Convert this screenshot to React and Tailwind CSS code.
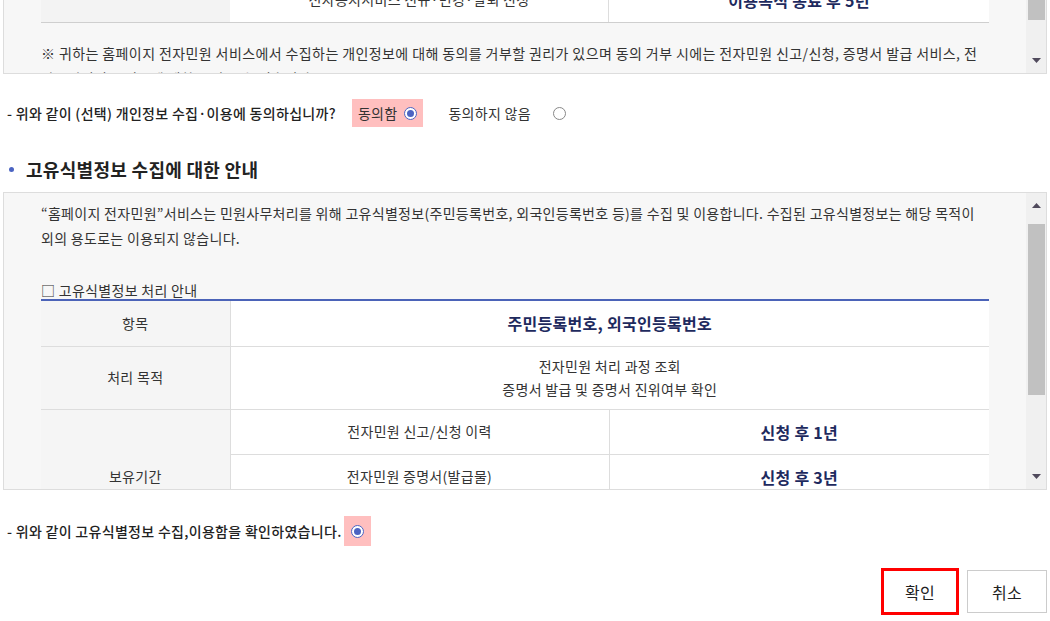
// App.jsx
import React from "react";

const font = { fontFamily: '"Noto Sans CJK KR", "Noto Sans", sans-serif' };

function Radio({ checked }) {
  if (checked) {
    return (
      <span className="inline-flex w-[13px] h-[13px] rounded-full border border-[#4b64c2] items-center justify-center bg-white">
        <span className="w-[7px] h-[7px] rounded-full bg-[#4b64c2]" />
      </span>
    );
  }
  return <span className="inline-block w-[13px] h-[13px] rounded-full border border-[#888] bg-white" />;
}

function Scrollbar({ thumbTop, thumbHeight, showUp }) {
  return (
    <div className="w-[20px] shrink-0 bg-[#f0f0f0] flex flex-col items-center relative">
      {showUp && (
        <svg width="9" height="5" viewBox="0 0 9 5" className="absolute top-[10px] left-[6px]">
          <path d="M4.5 0 L9 5 L0 5 Z" fill="#504a5c" />
        </svg>
      )}
      <div
        className="absolute left-[2px] right-[1px] bg-[#c1c1c1]"
        style={{ top: thumbTop, height: thumbHeight }}
      />
      <svg width="9" height="5" viewBox="0 0 9 5" className="absolute bottom-[10px] left-[6px]">
        <path d="M0 0 L9 0 L4.5 5 Z" fill="#504a5c" />
      </svg>
    </div>
  );
}

export default function App() {
  return (
    <div className="w-[1050px] h-[621px] overflow-hidden bg-white text-[#333] px-[3px] tracking-[0.3px]" style={font}>
      {/* 위쪽 개인정보 박스 (스크롤된 상태) */}
      <div className="h-[74px] border-x border-b border-[#dddddd] bg-[#f7f7f7] flex overflow-hidden">
        <div className="flex-1 px-[37px] overflow-hidden">
          <div className="mt-[-23px] flex h-[46px] border-b border-[#cfcfcf] text-[14px]">
            <div className="w-[189px] bg-[#f3f3f3]" />
            <div className="w-[379px] bg-white border-r border-[#dddddd] flex items-center justify-center">
              전자통지서비스 신규·변경·탈퇴 신청
            </div>
            <div className="flex-1 bg-white flex items-center justify-center text-[16px] font-bold text-[#1e2a5e]">
              이용목적 종료 후 5년
            </div>
          </div>
          <p className="mt-[18px] text-[14px] leading-[25px] tracking-[0.4px]">
            ※ 귀하는 홈페이지 전자민원 서비스에서 수집하는 개인정보에 대해 동의를 거부할 권리가 있으며 동의 거부 시에는 전자민원 신고/신청, 증명서 발급 서비스, 전자통지서비스 이용에 제한을 받을 수 있습니다.
          </p>
        </div>
        <Scrollbar thumbTop={-20} thumbHeight={40} />
      </div>

      {/* 선택 동의 */}
      <div className="mt-[25px] flex items-center h-[28px] text-[14px] pl-[4px]">
        <span className="font-medium text-[#222]">- 위와 같이 (선택) 개인정보 수집·이용에 동의하십니까?</span>
        <label className="ml-[16px] h-[28px] bg-[#ffbfbf] flex items-center gap-[7px] px-[6px]">
          <span>동의함</span>
          <Radio checked />
        </label>
        <label className="ml-[25px] flex items-center gap-[22px]">
          <span>동의하지 않음</span>
          <Radio />
        </label>
      </div>

      {/* 고유식별정보 안내 */}
      <h3 className="mt-[28px] flex items-center h-[28px] text-[18px] font-bold text-[#222]">
        <span className="w-[5px] h-[5px] rounded-full bg-[#4b64c2] ml-[6px] mr-[12px]" />
        고유식별정보 수집에 대한 안내
      </h3>

      <div className="mt-[9px] h-[298px] border border-[#dddddd] bg-[#f7f7f7] flex overflow-hidden">
        <div className="flex-1 px-[37px] pt-[8px] overflow-hidden">
          <p className="text-[14px] leading-[25px]">
            “홈페이지 전자민원”서비스는 민원사무처리를 위해 고유식별정보(주민등록번호, 외국인등록번호 등)를 수집 및 이용합니다. 수집된 고유식별정보는 해당 목적이 외의 용도로는 이용되지 않습니다.
          </p>
          <div className="mt-[30px] text-[14px] leading-[18px]">□ 고유식별정보 처리 안내</div>
          <table className="w-full border-t-2 border-[#4b63b8] border-collapse text-[14px]">
            <tbody>
              <tr className="h-[46px] border-b border-[#dddddd]">
                <th className="w-[189px] bg-[#f5f5f5] font-normal border-r border-[#dddddd]">항목</th>
                <td colSpan={2} className="bg-white text-center text-[16px] font-bold text-[#1e2a5e]">
                  주민등록번호, 외국인등록번호
                </td>
              </tr>
              <tr className="h-[63px] border-b border-[#dddddd]">
                <th className="bg-[#f5f5f5] font-normal border-r border-[#dddddd]">처리 목적</th>
                <td colSpan={2} className="bg-white text-center leading-[23px]">
                  전자민원 처리 과정 조회
                  <br />
                  증명서 발급 및 증명서 진위여부 확인
                </td>
              </tr>
              <tr className="h-[45px] border-b border-[#dddddd]">
                <th rowSpan={3} className="bg-[#f5f5f5] font-normal border-r border-[#dddddd] align-middle">
                  보유기간
                </th>
                <td className="w-[379px] bg-white text-center border-r border-[#dddddd]">전자민원 신고/신청 이력</td>
                <td className="bg-white text-center text-[16px] font-bold text-[#1e2a5e]">신청 후 1년</td>
              </tr>
              <tr className="h-[45px] border-b border-[#dddddd]">
                <td className="bg-white text-center border-r border-[#dddddd]">전자민원 증명서(발급물)</td>
                <td className="bg-white text-center text-[16px] font-bold text-[#1e2a5e]">신청 후 3년</td>
              </tr>
              <tr className="h-[45px] border-b border-[#dddddd]">
                <td className="bg-white border-r border-[#dddddd]" />
                <td className="bg-white" />
              </tr>
            </tbody>
          </table>
        </div>
        <Scrollbar thumbTop={31} thumbHeight={171} showUp />
      </div>

      {/* 확인 */}
      <div className="mt-[26px] flex items-center h-[30px] text-[14px] pl-[4px]">
        <span className="font-medium text-[#222]">- 위와 같이 고유식별정보 수집,이용함을 확인하였습니다.</span>
        <label className="ml-[2px] w-[27px] h-[30px] bg-[#ffbfbf] flex items-center justify-center">
          <Radio checked />
        </label>
      </div>

      <div className="mt-[22px] flex justify-end items-center gap-[8px]">
        <button className="w-[78px] h-[47px] border-[3px] border-[#ff0000] bg-white text-[16px] text-[#222]">
          확인
        </button>
        <button className="w-[80px] h-[43px] border border-[#cccccc] bg-white text-[16px] text-[#222]">
          취소
        </button>
      </div>
    </div>
  );
}
